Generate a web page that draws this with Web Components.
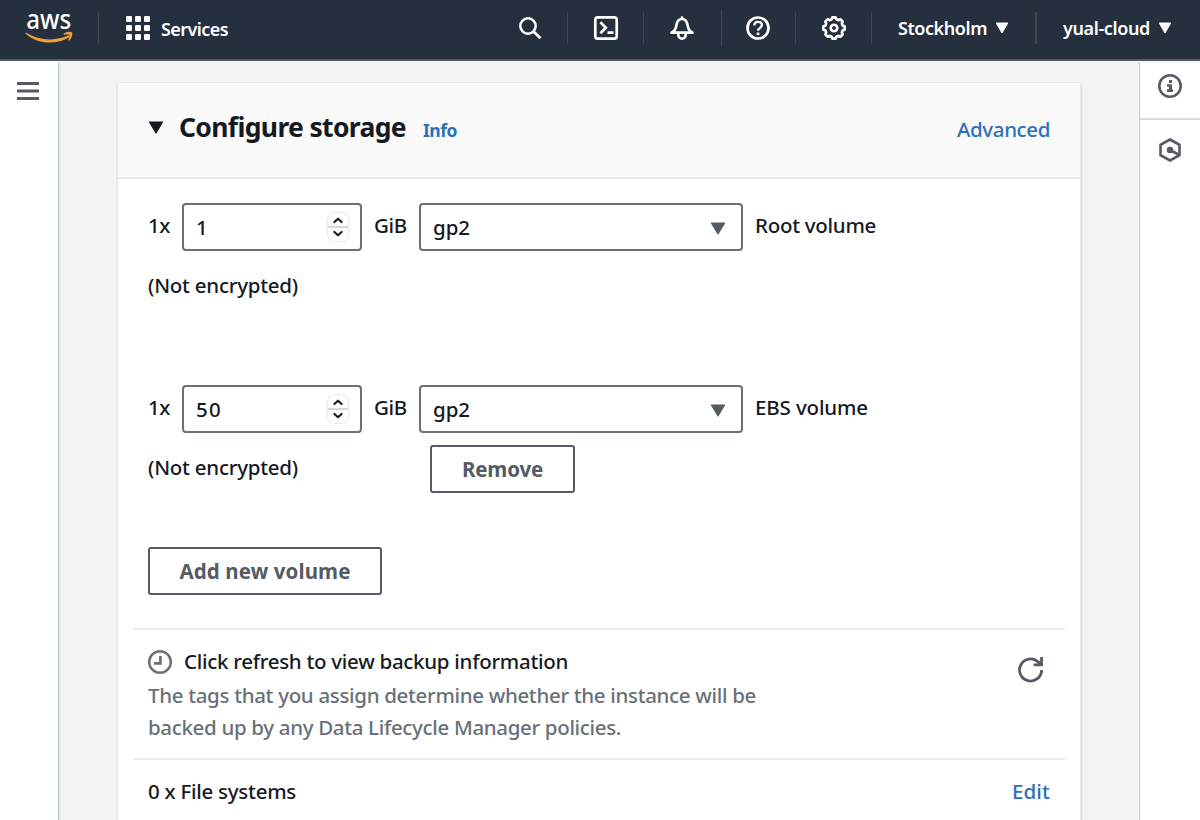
<!DOCTYPE html>
<html lang="en"><head><meta charset="utf-8"><title>Configure storage</title>
<style>
html,body{margin:0;height:100%;overflow:hidden}
body{font-family:"Noto Sans","Open Sans",sans-serif;color:#16191f;background:#f2f3f3}
</style></head><body>
<console-app></console-app>
<script>
const define=(name,html,init)=>customElements.define(name,class extends HTMLElement{
  connectedCallback(){
    if(this.shadowRoot)return;
    const t=document.createElement('template');
    t.innerHTML=typeof html==='function'?html(this):html;
    this.attachShadow({mode:'open'}).append(t.content.cloneNode(true));
    if(init)init(this);
  }
});

/* One line of text spaced to fill the width given in w */
define('fit-text',e=>`<style>:host{display:block;flex:none;box-sizing:content-box;width:${e.getAttribute('w')}px;height:24px;line-height:${e.getAttribute('lh')||24}px;font-size:${e.getAttribute('size')||20.5}px;font-weight:${e.getAttribute('weight')||480};white-space:nowrap}
span{display:inline-block;white-space:pre}</style><span><slot></slot></span>`,e=>{
  const s=e.shadowRoot.querySelector('span'),n=e.textContent.length;
  s.style.letterSpacing=((+e.getAttribute('w')-s.getBoundingClientRect().width)/n).toFixed(3)+'px';
});

const icons={
 menu:'<path d="M0 2.500h22M0 10h22M0 17.500h22" stroke="currentColor" stroke-width="2.900"/>',
 grid:[0,9,18].map(y=>[0,9,18].map(x=>`<rect x="${x}" y="${y}" width="6" height="6" rx="1.3" fill="currentColor"/>`).join('')).join(''),
 search:'<circle cx="9" cy="10" r="7.700" stroke="currentColor" stroke-width="2.500"/><path d="M14.500 15.500l7 6.700" stroke="currentColor" stroke-width="2.900"/>',
 shell:'<rect x="1.3" y="1.3" width="21.4" height="21.4" rx="2.5" stroke="currentColor" stroke-width="2.7"/><path d="M6.4 6.3l5.4 5.5-5.4 5.5M13.5 16.6h6" stroke="currentColor" stroke-width="2.7"/>',
 bell:'<path d="M12 1.500v1.500M1.500 16.700h21c-3.800-2.500-4.300-4-4.900-7.400C17 5.600 15 3 12 3S7 5.600 6.400 9.300C5.800 12.700 5.300 14.200 1.500 16.700z" stroke="currentColor" stroke-width="2.700" stroke-linejoin="round" stroke-linecap="round"/><path d="M8.300 18v1a3.700 3.700 0 007.400 0V18" stroke="currentColor" stroke-width="2.600"/>',
 help:'<circle cx="12" cy="12" r="10.500" stroke="currentColor" stroke-width="2.700"/><path d="M8.300 9.500c0-2.200 1.600-3.700 3.800-3.700s3.800 1.400 3.800 3.300c0 3-3.900 2.800-3.900 5.700" stroke="currentColor" stroke-width="2.300"/><path d="M12 16.600v2.500" stroke="currentColor" stroke-width="2.700"/>',
 gear:(()=>{let d='';for(let i=0;i<8;i++){for(const [o,r] of [[-9,10.8],[9,10.8],[15,9],[30,9]]){const a=(i*45+o)*Math.PI/180;d+=(d?'L':'M')+(12+r*Math.sin(a)).toFixed(2)+' '+(12-r*Math.cos(a)).toFixed(2)}}return `<path d="${d}Z" stroke="currentColor" stroke-width="2.600" stroke-linejoin="round"/><circle cx="12" cy="12" r="3.3" stroke="currentColor" stroke-width="2.600"/>`})(),
 down:'<path d="M1.200 1h11.600L7 11z" fill="currentColor" stroke="currentColor" stroke-linejoin="round"/>',
 info:'<circle cx="12" cy="12" r="10.700" stroke="currentColor" stroke-width="2.600"/><path d="M11 6h3v3h-3zM9 10.300h5v5h1V18H9v-2.700h2v-2.500H9z" fill="currentColor"/>',
 hex:'<path d="M12 1.500l9.500 5.250v10.500L12 22.500l-9.500-5.250V6.750z" stroke="currentColor" stroke-width="2.600"/><circle cx="12" cy="12" r="3.200" fill="currentColor"/><path d="M12 12l8.500 4.500" stroke="currentColor" stroke-width="2.700"/>',
 clock:'<circle cx="12" cy="12" r="10.800" stroke="currentColor" stroke-width="2.500"/><path d="M12.400 6v7.300H6" stroke="currentColor" stroke-width="2.700"/>',
 refresh:'<path d="M22.700 12.500A10.600 10.600 0 1 1 19.300 4.700L22.500 7.500" stroke="currentColor" stroke-width="2.700"/><path d="M22.600 0v7.600H15" stroke="currentColor" stroke-width="2.700"/>'
};
define('ui-icon',e=>{const w=e.getAttribute('w')||24,h=e.getAttribute('h')||24,n=e.getAttribute('name');
 const vb=n==='down'?'0 0 14 12':n==='menu'?'0 0 22 21':'0 0 24 24';
 return `<style>:host{display:block;flex:none;width:${w}px;height:${h}px}svg{display:block;overflow:visible}</style><svg width="${w}" height="${h}" viewBox="${vb}" preserveAspectRatio="none" fill="none">${icons[n]}</svg>`});

define('aws-logo',`<style>:host{display:block;width:50px;height:34px}svg{display:block;overflow:visible}text{font:500 26.5px "Noto Sans",sans-serif}</style>
<svg width="50" height="34" fill="none"><text x="1.300" y="17.900" fill="#fff" textLength="45" lengthAdjust="spacingAndGlyphs">aws</text>
<path d="M1.300 21.800C14 29.500 30 30.500 43.200 24.600c1.500-.7 2.600.5 1.200 1.700C32 33.800 13 33.800.8 23c-.6-.6-.2-1.600.5-1.200z" fill="#f29d38"/><path d="M38.800 22.400c2.500-1.900 7.300-2.200 8.200-1 .9 1.300-.2 6.100-2.900 8-.5.400-1 .1-.8-.5.700-1.700 1.800-4.300 1.300-5-.6-.7-3.700-.4-5.400-.2-.7 0-.9-.900-.4-1.300z" fill="#f29d38"/></svg>`);

define('nav-cell',e=>`<style>:host{display:flex;align-items:center;box-sizing:border-box;flex:none;position:relative;width:${e.getAttribute('w')}px;height:56px;padding-left:${e.getAttribute('pad')||0}px}
:host::after{content:"";position:absolute;right:-1px;top:${e.getAttribute('top')||12}px;height:${e.getAttribute('line')||32}px;width:${e.hasAttribute('last')?0:e.getAttribute('thick')||1}px;background:#414750}</style><slot></slot>`);

define('top-nav',`<style>:host{display:flex;height:59px;flex:none;background:#252f3e;border-bottom:2px solid #545b64;color:#fff}
ui-icon[name=down]{margin-left:8px}ui-icon[name=grid]{margin-right:11px}.s{padding-top:2px}</style>
<nav-cell w="98" pad="25"><aws-logo></aws-logo></nav-cell>
<nav-cell w="469" pad="28"><ui-icon name="grid"></ui-icon><fit-text class="s" w="67" size="18" weight="600">Services</fit-text><ui-icon name="search" style="margin-left:291px"></ui-icon></nav-cell>
<nav-cell w="76" pad="27"><ui-icon name="shell"></ui-icon></nav-cell>
<nav-cell w="78" pad="27" top="10" line="36"><ui-icon name="bell"></ui-icon></nav-cell>
<nav-cell w="74" pad="25"><ui-icon name="help"></ui-icon></nav-cell>
<nav-cell w="76" pad="27"><ui-icon name="gear"></ui-icon></nav-cell>
<nav-cell w="165" pad="27" thick="2"><fit-text w="89" size="18" weight="600">Stockholm</fit-text><ui-icon name="down" w="14" h="12"></ui-icon></nav-cell>
<nav-cell w="164" pad="27" last><fit-text w="87" size="18" weight="600">yual-cloud</fit-text><ui-icon name="down" w="14" h="12"></ui-icon></nav-cell>`);

define('num-input',`<style>:host{display:flex;box-sizing:border-box;flex:none;width:180px;height:48px;border:2px solid #687078;border-radius:4px;align-items:center;justify-content:space-between;padding:0 12px;background:#fff}
.st{width:20px;height:28px;border-radius:7px;margin-bottom:1px;box-shadow:0 0 2px #b0b0b0;background:linear-gradient(#fff 13px,#d8d8d8 13px,#d8d8d8 15px,#fff 15px)}svg{display:block}</style>
<slot></slot><div class="st"><svg width="20" height="28" fill="none" stroke="#1c1c1c" stroke-width="2.200" stroke-linecap="round" stroke-linejoin="round"><path d="M6.400 9L10 5.700l3.600 3.300M6.400 19L10 22.300l3.600-3.300"/></svg></div>`);
define('select-box',`<style>:host{display:flex;box-sizing:border-box;flex:none;width:324px;height:48px;border:2px solid #687078;border-radius:4px;align-items:center;justify-content:space-between;padding:0 15px 0 12px;background:#fff}ui-icon{color:#545b64;margin-top:2px}</style>
<fit-text w="37">gp2</fit-text><ui-icon name="down" w="16" h="13"></ui-icon>`);
define('ui-button',e=>`<style>:host{display:flex;box-sizing:border-box;width:${e.getAttribute('w')}px;height:48px;border:2px solid #545b64;border-radius:3px;align-items:center;justify-content:center;color:#545b64;background:#fff}</style><slot></slot>`);

define('volume-row',e=>`<style>:host{display:block}.r{display:flex;align-items:center;height:48px}.r>fit-text{padding-bottom:4px}
.x{margin-right:12px}.g{margin:0 12px}.k{margin-left:12px}.n{display:flex;height:24px;padding-top:22px}</style>
<div class="r"><fit-text class="x" w="22">1x</fit-text><num-input><fit-text w="${e.getAttribute('vw')}">${e.getAttribute('value')}</fit-text></num-input><fit-text class="g" w="33">GiB</fit-text><select-box></select-box><fit-text class="k" w="${e.getAttribute('kw')}">${e.getAttribute('kind')}</fit-text></div>
<div class="n"><fit-text w="150">(Not encrypted)</fit-text><slot></slot></div>`);

define('storage-card',`<style>:host{display:block;box-sizing:border-box;width:962px;height:737px;background:#fff;box-shadow:0 0 0 1px #e6e9e9,1px 1px 2px #aab7b8,-1px 0 1px #b8c0c0}
header{display:flex;box-sizing:border-box;height:96px;padding:0 30px;background:#fafafa;border-bottom:2px solid #eaeded;align-items:center}
header>ui-icon{margin-bottom:6px}.b{padding:24px 30px 0}.a{color:#2a70bb}.adv{margin-left:auto}.info{margin-left:17px}
.v1{height:182px}.v2{height:162px}hr{border:0;height:2px;background:#eaeded;margin:33px -15px 0}
.bk{display:flex;justify-content:space-between;height:128px;box-sizing:border-box;padding-top:19px;color:#687078}.h{display:flex;gap:12px;color:#16191f}.h ui-icon{color:#687078;margin-top:1px}
.l1{margin-top:9px}.l2{margin-top:8px}.rf{color:#545b64;margin:8px 7px 0 0}.ft{display:flex;justify-content:space-between;padding-top:19px}.remove{margin:-10px 0 0 132px}</style>
<header><ui-icon name="down" w="16" h="13"></ui-icon><fit-text lh="26" w="227" size="26.5" weight="700" style="margin:0 0 9px 15px">Configure storage</fit-text><fit-text lh="26" class="a info" w="34" size="17.5" weight="700" style="margin-bottom:3px">Info</fit-text><fit-text class="a adv" w="93" style="margin-bottom:3px">Advanced</fit-text></header>
<div class="b"><volume-row class="v1" value="1" vw="12" kind="Root volume" kw="121"></volume-row>
<volume-row class="v2" value="50" vw="26" kind="EBS volume" kw="113"><ui-button class="remove" w="145"><fit-text w="81" weight="700">Remove</fit-text></ui-button></volume-row>
<ui-button w="234"><fit-text w="171" weight="700">Add new volume</fit-text></ui-button>
<hr><div class="bk"><div><div class="h"><ui-icon name="clock"></ui-icon><fit-text w="384">Click refresh to view backup information</fit-text></div>
<fit-text class="l1" w="608">The tags that you assign determine whether the instance will be</fit-text><fit-text class="l2" w="473">backed up by any Data Lifecycle Manager policies.</fit-text></div><ui-icon class="rf" name="refresh" w="25" h="25"></ui-icon></div>
<hr style="margin-top:0"><div class="ft"><fit-text w="148">0 x File systems</fit-text><fit-text class="a" w="38">Edit</fit-text></div></div>`);

define('side-left',`<style>:host{display:block;box-sizing:border-box;width:58px;background:#fff;box-shadow:1px 2px 2px #aab7b8;padding:20px 0 0 17px;color:#545b64}</style><ui-icon name="menu" w="22" h="21"></ui-icon>`);
define('side-right',`<style>:host{display:block;box-sizing:border-box;width:61px;margin-top:2px;background:#fff;border-left:1px solid #c3caca;color:#545b64}div{box-sizing:border-box;height:57px;padding:11px 0 0 18px;border-bottom:2px solid #d5dbdb}div+div{border:0;padding-top:18px}</style><div><ui-icon name="info"></ui-icon></div><div><ui-icon name="hex"></ui-icon></div>`);
define('console-app',`<style>:host{display:flex;flex-direction:column;width:1200px;height:820px;overflow:hidden}main{display:flex;flex:1;justify-content:space-between}section{padding:22px 0 0;margin-left:1px}</style>
<top-nav></top-nav><main><side-left></side-left><section><storage-card></storage-card></section><side-right></side-right></main>`);
</script></body></html>
